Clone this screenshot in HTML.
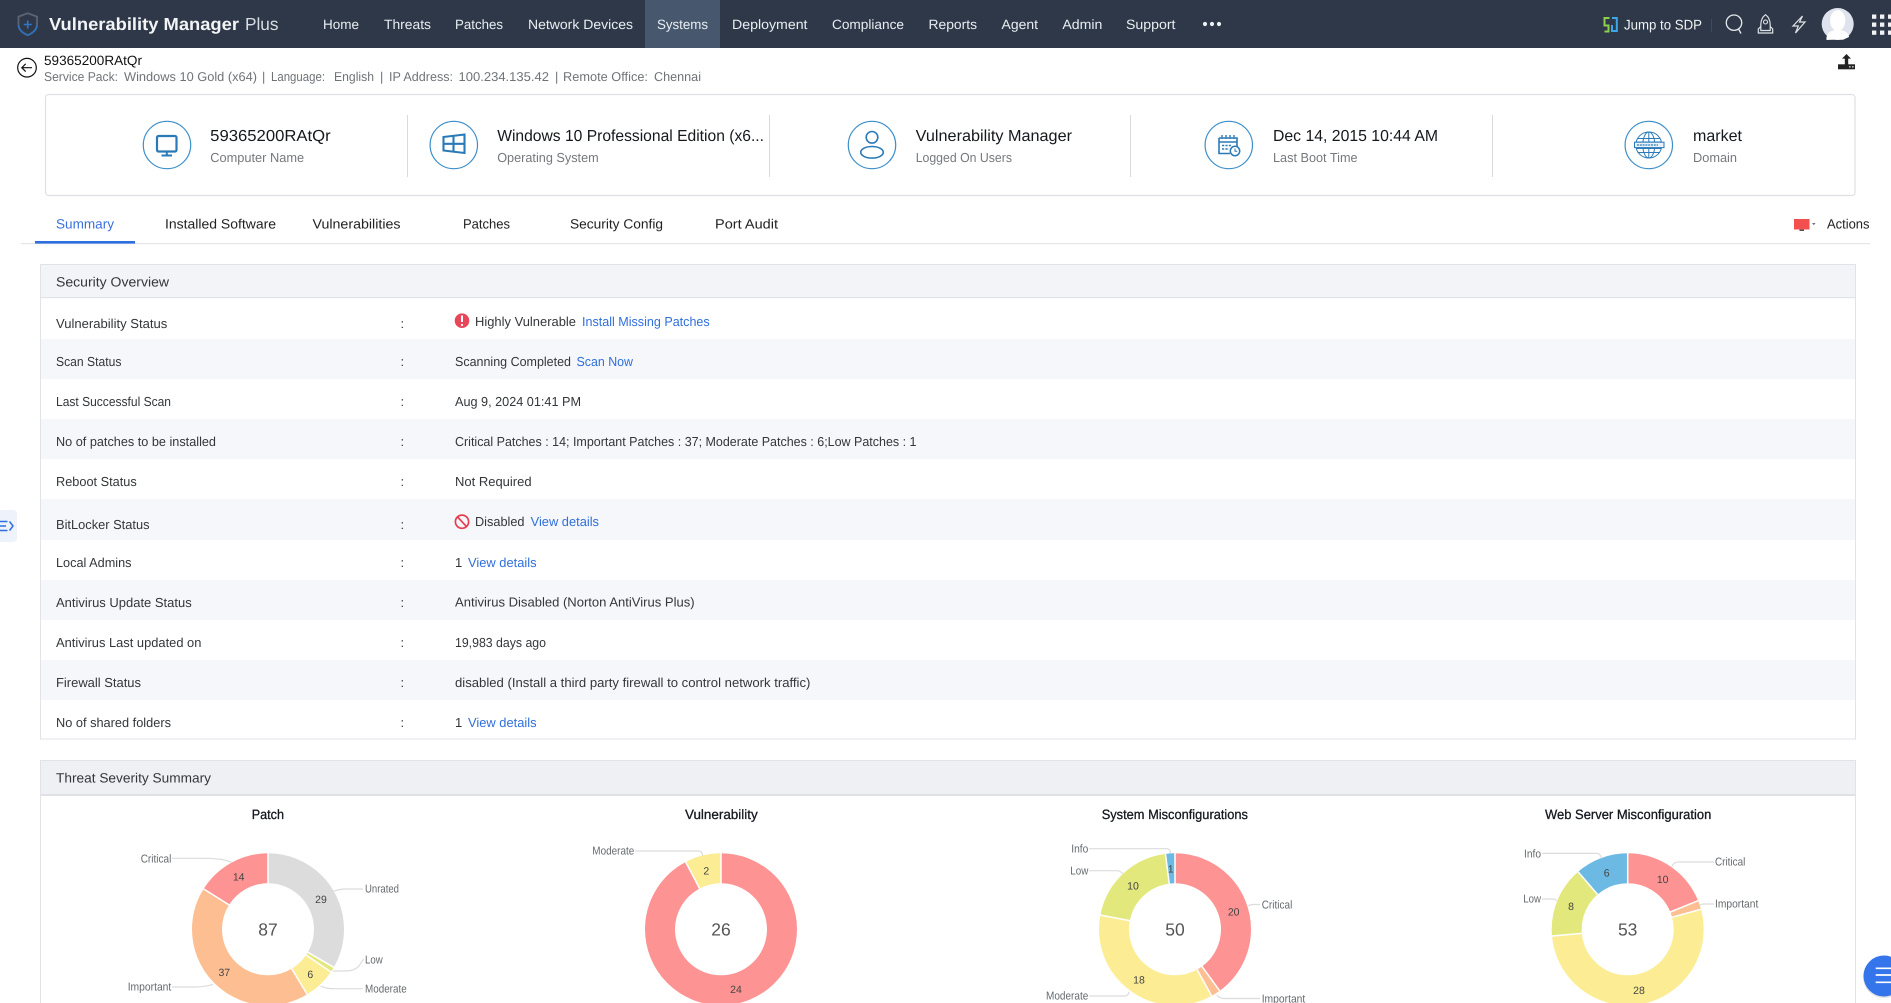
<!DOCTYPE html>
<html lang="en">
<head>
<meta charset="utf-8">
<title>Vulnerability Manager Plus - System Summary</title>
<style>
html,body{margin:0;padding:0;width:1891px;height:1003px;overflow:hidden;background:#fff}
svg{display:block;font-family:"Liberation Sans",Arial,sans-serif;text-rendering:geometricPrecision}
.m{font-size:13.5px;fill:#e9edf2}
.t{font-size:13.5px;fill:#222}
.s{font-size:12.8px;fill:#6f7378}
.big{font-size:16px;fill:#15181c}
.sub{font-size:13px;fill:#75787d}
.l{font-size:13px;fill:#33363a}
.v{font-size:13px;fill:#33363a}
.a{font-size:13px;fill:#2f6fdb}
.h{font-size:13.5px;fill:#33363a}
.ct{font-size:13.5px;fill:#15181f;stroke:#15181f;stroke-width:.3px}
.cl{font-size:11.5px;fill:#666a6e}
.d{font-size:10.5px;fill:#444;text-anchor:middle}
.c{font-size:17.5px;fill:#555;text-anchor:middle}
.ld{fill:none;stroke:#dcdcdc;stroke-width:1.2}
.ci{fill:#fff;stroke:#3d8fc9;stroke-width:1.2}
.ic{fill:none;stroke:#2a7ab8;stroke-width:1.6}
circle.sl{fill:none;stroke-width:30}
.sep{stroke:#fff;stroke-width:1.5}
</style>
</head>
<body>
<svg xmlns="http://www.w3.org/2000/svg" width="1891" height="1003" viewBox="0 0 1891 1003">
<!-- Top bar -->
<rect x="0" y="0" width="1891" height="48" fill="#2e3848"/>
<rect x="645" y="0" width="75" height="48" fill="#47586e"/>
<path d="M27.7 13.2 L37 16.6 V24 C37 29.5 33 33 27.7 35.2 C22.5 33 18.5 29.5 18.5 24 V16.6 Z" fill="none" stroke="#5b6472" stroke-width="1.8"/>
<path d="M37 25 C37 29.5 33 33 27.7 35.2 C22.5 33 18.5 29.5 18.5 25" fill="none" stroke="#2f6fb5" stroke-width="1.8"/>
<path d="M27.7 20.5 V28.5 M23.7 24.5 H31.7" stroke="#2f78c5" stroke-width="1.6"/>
<text x="49" y="30" textLength="190" lengthAdjust="spacingAndGlyphs" font-size="17.5" font-weight="bold" fill="#f2f4f6">Vulnerability Manager</text>
<text x="245" y="30" textLength="33.5" lengthAdjust="spacingAndGlyphs" font-size="17.5" fill="#d9dde2">Plus</text>
<text class="m" x="323" y="29" textLength="36" lengthAdjust="spacingAndGlyphs">Home</text>
<text class="m" x="384" y="29" textLength="47" lengthAdjust="spacingAndGlyphs">Threats</text>
<text class="m" x="455" y="29" textLength="48" lengthAdjust="spacingAndGlyphs">Patches</text>
<text class="m" x="528" y="29" textLength="105" lengthAdjust="spacingAndGlyphs">Network Devices</text>
<text class="m" x="657" y="29" textLength="51" lengthAdjust="spacingAndGlyphs">Systems</text>
<text class="m" x="732" y="29" textLength="75.5" lengthAdjust="spacingAndGlyphs">Deployment</text>
<text class="m" x="832" y="29" textLength="72" lengthAdjust="spacingAndGlyphs">Compliance</text>
<text class="m" x="928.5" y="29" textLength="48.5" lengthAdjust="spacingAndGlyphs">Reports</text>
<text class="m" x="1001.5" y="29" textLength="36.5" lengthAdjust="spacingAndGlyphs">Agent</text>
<text class="m" x="1062.4" y="29" textLength="40" lengthAdjust="spacingAndGlyphs">Admin</text>
<text class="m" x="1126" y="29" textLength="49.5" lengthAdjust="spacingAndGlyphs">Support</text>
<circle cx="1205" cy="24" r="2.1" fill="#eef0f3"/><circle cx="1212" cy="24" r="2.1" fill="#eef0f3"/><circle cx="1219" cy="24" r="2.1" fill="#eef0f3"/>
<!-- Right header icons -->
<path d="M1609.5 18 H1604.5 V25.5 H1608.5 V31.5 H1604.5" fill="none" stroke="#8ad14c" stroke-width="2"/>
<path d="M1612 18 H1616.8 V31 H1612 V25" fill="none" stroke="#3aa8e8" stroke-width="2"/>
<text x="1624" y="29.3" textLength="78" lengthAdjust="spacingAndGlyphs" font-size="14" fill="#f0f2f5">Jump to SDP</text>
<rect x="1711" y="19" width="1" height="13" fill="#3e4b5e"/>
<circle cx="1734" cy="22.7" r="7.7" fill="none" stroke="#e6e8ec" stroke-width="1.3"/>
<path d="M1738.5 29 L1741 33.5" stroke="#e6e8ec" stroke-width="1.3"/>
<path d="M1765.5 14.7 C1761.6 17.5 1760.8 21 1760.8 25 V30.5 H1770.2 V25 C1770.2 21 1769.4 17.5 1765.5 14.7 Z" fill="none" stroke="#dfe2e7" stroke-width="1.2"/>
<circle cx="1765.5" cy="22" r="2" fill="none" stroke="#dfe2e7" stroke-width="1.1"/>
<path d="M1760.8 26.5 L1758.3 29 V33 H1772.7 V29 L1770.2 26.5" fill="none" stroke="#dfe2e7" stroke-width="1.2"/>
<path d="M1802.5 16 L1793 26 H1798.3 L1795.5 33 L1805 22 H1799.5 L1802.5 16 Z" fill="none" stroke="#e0e3e8" stroke-width="1.2"/>
<circle cx="1837.7" cy="24" r="16" fill="#dfe3ed"/>
<ellipse cx="1837.7" cy="20.5" rx="7.6" ry="10.5" fill="#fff"/>
<path d="M1826.5 40 C1826 33 1831 30 1837.7 30 C1844.5 30 1849 33 1849 37 L1843 39.8 H1832 Z" fill="#fff"/>
<g fill="#f0f2f5">
<rect x="1872" y="14.5" width="4.3" height="4.3"/><rect x="1880" y="14.5" width="4.3" height="4.3"/><rect x="1888" y="14.5" width="3" height="4.3"/>
<rect x="1872" y="22.5" width="4.3" height="4.3"/><rect x="1880" y="22.5" width="4.3" height="4.3"/><rect x="1888" y="22.5" width="3" height="4.3"/>
<rect x="1872" y="30.5" width="4.3" height="4.3"/><rect x="1880" y="30.5" width="4.3" height="4.3"/><rect x="1888" y="30.5" width="3" height="4.3"/>
</g>
<!-- Breadcrumb -->
<circle cx="27" cy="67.7" r="9.3" fill="none" stroke="#111" stroke-width="1.2"/>
<path d="M32 67.7 H22 M25.7 63.8 L21.8 67.7 L25.7 71.6" fill="none" stroke="#111" stroke-width="1.2"/>
<text class="t" x="44" y="65" textLength="98" lengthAdjust="spacingAndGlyphs" style="fill:#111">59365200RAtQr</text>
<text class="s" x="44" y="81" textLength="74" lengthAdjust="spacingAndGlyphs">Service Pack:</text>
<text class="s" x="124" y="81" textLength="133" lengthAdjust="spacingAndGlyphs">Windows 10 Gold (x64)</text>
<text class="s" x="262" y="81">|</text>
<text class="s" x="271" y="81" textLength="54" lengthAdjust="spacingAndGlyphs" style="font-size:13px">Language:</text>
<text class="s" x="334" y="81" textLength="40" lengthAdjust="spacingAndGlyphs">English</text>
<text class="s" x="380" y="81">|</text>
<text class="s" x="389" y="81" textLength="64" lengthAdjust="spacingAndGlyphs">IP Address:</text>
<text class="s" x="458.5" y="81" textLength="90.5" lengthAdjust="spacingAndGlyphs">100.234.135.42</text>
<text class="s" x="555" y="81">|</text>
<text class="s" x="563" y="81" textLength="85" lengthAdjust="spacingAndGlyphs">Remote Office:</text>
<text class="s" x="654" y="81" textLength="47" lengthAdjust="spacingAndGlyphs">Chennai</text>
<!-- Upload icon -->
<path d="M1846.5 54 L1851 58.6 H1848.2 V65 H1844.8 V58.6 H1842 Z" fill="#222"/>
<rect x="1838" y="64.3" width="17" height="5" fill="#222"/>
<rect x="1849" y="66" width="1.6" height="1.6" fill="#bbb"/><rect x="1852" y="66" width="1.6" height="1.6" fill="#bbb"/>
<!-- Info card -->
<rect x="45.5" y="94.5" width="1809.5" height="101" rx="3" fill="#fff" stroke="#dfe0e6" stroke-width="1.2"/>
<g fill="#d9dadd">
<rect x="407" y="115" width="1" height="62"/><rect x="769" y="115" width="1" height="62"/><rect x="1130" y="115" width="1" height="62"/><rect x="1492" y="115" width="1" height="62"/>
</g>
<circle class="ci" cx="167" cy="145" r="23.7"/>
<rect x="157" y="136" width="19.5" height="15.5" rx="1.5" fill="none" stroke="#2a7ab8" stroke-width="2.2"/>
<path d="M166.8 151.5 V155 M161.5 155.5 H172" stroke="#2a7ab8" stroke-width="2" fill="none"/>
<text class="big" x="210.2" y="141" textLength="120.5" lengthAdjust="spacingAndGlyphs">59365200RAtQr</text>
<text class="sub" x="210.2" y="162" textLength="94" lengthAdjust="spacingAndGlyphs">Computer Name</text>
<circle class="ci" cx="453.8" cy="145" r="23.7"/>
<path d="M443.5 137 L464.5 134.5 V153 L443.5 150.5 Z M453.5 136 V152 M443.5 143.8 H464.5" fill="none" stroke="#2a7ab8" stroke-width="2.1"/>
<text class="big" x="497.2" y="141" textLength="266.8" lengthAdjust="spacingAndGlyphs">Windows 10 Professional Edition (x6...</text>
<text class="sub" x="497.2" y="162" textLength="101.5" lengthAdjust="spacingAndGlyphs">Operating System</text>
<circle class="ci" cx="872" cy="145" r="23.7"/>
<circle class="ic" cx="872" cy="137.3" r="5.8"/>
<ellipse class="ic" cx="872" cy="152.3" rx="11.3" ry="5.8"/>
<text class="big" x="915.7" y="141" textLength="156.3" lengthAdjust="spacingAndGlyphs">Vulnerability Manager</text>
<text class="sub" x="915.7" y="162" textLength="96.3" lengthAdjust="spacingAndGlyphs">Logged On Users</text>
<circle class="ci" cx="1228.8" cy="145" r="23.7"/>
<path d="M1219 138 H1237 V147 M1219 138 V153.5 H1230 M1219 142 H1237" fill="none" stroke="#2a7ab8" stroke-width="1.6"/>
<path d="M1222 135 V139 M1226 135 V139 M1230 135 V139 M1234 135 V139 M1222 145.5 H1232 M1222 149 H1229" stroke="#2a7ab8" stroke-width="1.4" fill="none" stroke-dasharray="2.2 1.2"/>
<circle cx="1235" cy="151" r="4.7" fill="#fff" stroke="#2a7ab8" stroke-width="1.5"/>
<path d="M1235 148.5 V151.3 H1237.3" fill="none" stroke="#2a7ab8" stroke-width="1"/>
<text class="big" x="1273" y="141" textLength="165" lengthAdjust="spacingAndGlyphs">Dec 14, 2015 10:44 AM</text>
<text class="sub" x="1273" y="162" textLength="84.6" lengthAdjust="spacingAndGlyphs">Last Boot Time</text>
<circle class="ci" cx="1648.8" cy="145" r="23.7"/>
<g fill="none" stroke="#2a7ab8" stroke-width="1">
<circle cx="1648.8" cy="145" r="13"/><ellipse cx="1648.8" cy="145" rx="6" ry="13"/>
<path d="M1648.8 132 V158 M1637.5 138.5 H1660 M1636 142 H1661.5 M1636 148.5 H1661.5 M1637.5 152.5 H1660"/>
</g>
<rect x="1634.5" y="142.2" width="29.5" height="5.4" fill="#eaf3fa" stroke="#2a7ab8" stroke-width="1"/>
<path d="M1637 145 H1658" stroke="#2a7ab8" stroke-width="1.2" stroke-dasharray="2 .8"/>
<text class="big" x="1693" y="141" textLength="49" lengthAdjust="spacingAndGlyphs">market</text>
<text class="sub" x="1693" y="162" textLength="44" lengthAdjust="spacingAndGlyphs">Domain</text>
<!-- Tabs -->
<rect x="21" y="243" width="1849" height="1.2" fill="#e4e5e9"/>
<rect x="35" y="241" width="100" height="2.6" fill="#2e6fe0"/>
<text class="t" x="56" y="228.6" textLength="58" lengthAdjust="spacingAndGlyphs" style="fill:#3a70dc">Summary</text>
<text class="t" x="165" y="228.6" textLength="111" lengthAdjust="spacingAndGlyphs">Installed Software</text>
<text class="t" x="312.5" y="228.6" textLength="88" lengthAdjust="spacingAndGlyphs">Vulnerabilities</text>
<text class="t" x="463" y="228.6" textLength="47" lengthAdjust="spacingAndGlyphs">Patches</text>
<text class="t" x="570" y="228.6" textLength="93" lengthAdjust="spacingAndGlyphs">Security Config</text>
<text class="t" x="715" y="228.6" textLength="63" lengthAdjust="spacingAndGlyphs">Port Audit</text>
<rect x="1794" y="219" width="15.5" height="10.5" fill="#f44f4f"/>
<rect x="1799.5" y="229.5" width="4.5" height="1.5" fill="#555"/>
<path d="M1812 223 H1815.6 L1813.8 225.2 Z" fill="#777"/>
<text class="t" x="1827" y="228.6" textLength="42.5" lengthAdjust="spacingAndGlyphs">Actions</text>
<!-- Side toggle -->
<path d="M0 510 H13 Q17 510 17 514 V538 Q17 542 13 542 H0 Z" fill="#eef2fa"/>
<path d="M0 521.5 H7.5 M0 526 H6 M0 530.5 H7.5 M9.5 521.5 L13 526 L9.5 530.5" fill="none" stroke="#2e6fe0" stroke-width="1.5"/>
<!-- Security overview -->
<rect x="40.5" y="264.5" width="1815" height="474.5" fill="#fff" stroke="#e2e3e8"/>
<rect x="41" y="265" width="1814" height="32.5" fill="#f3f4f8"/>
<rect x="41" y="297" width="1814" height="1.2" fill="#e2e3e8"/>
<g fill="#f6f7fb">
<rect x="41" y="339" width="1814" height="40"/>
<rect x="41" y="419" width="1814" height="40"/>
<rect x="41" y="499" width="1814" height="41"/>
<rect x="41" y="580" width="1814" height="40"/>
<rect x="41" y="660" width="1814" height="40"/>
</g>
<text class="h" x="56" y="286.7" textLength="113" lengthAdjust="spacingAndGlyphs">Security Overview</text>
<text class="l" x="56" y="328" textLength="111.3" lengthAdjust="spacingAndGlyphs">Vulnerability Status</text>
<text class="l" x="56" y="366" textLength="65.4" lengthAdjust="spacingAndGlyphs">Scan Status</text>
<text class="l" x="56" y="406" textLength="115" lengthAdjust="spacingAndGlyphs">Last Successful Scan</text>
<text class="l" x="56" y="446" textLength="160" lengthAdjust="spacingAndGlyphs">No of patches to be installed</text>
<text class="l" x="56" y="486" textLength="80.7" lengthAdjust="spacingAndGlyphs">Reboot Status</text>
<text class="l" x="56" y="529" textLength="93.5" lengthAdjust="spacingAndGlyphs">BitLocker Status</text>
<text class="l" x="56" y="567" textLength="75.5" lengthAdjust="spacingAndGlyphs">Local Admins</text>
<text class="l" x="56" y="607" textLength="135.7" lengthAdjust="spacingAndGlyphs">Antivirus Update Status</text>
<text class="l" x="56" y="647" textLength="145.4" lengthAdjust="spacingAndGlyphs">Antivirus Last updated on</text>
<text class="l" x="56" y="687" textLength="85" lengthAdjust="spacingAndGlyphs">Firewall Status</text>
<text class="l" x="56" y="727" textLength="115" lengthAdjust="spacingAndGlyphs">No of shared folders</text>
<g class="l">
<text class="l" x="400.5" y="328">:</text><text class="l" x="400.5" y="366">:</text><text class="l" x="400.5" y="406">:</text><text class="l" x="400.5" y="446">:</text><text class="l" x="400.5" y="486">:</text><text class="l" x="400.5" y="529">:</text><text class="l" x="400.5" y="567">:</text><text class="l" x="400.5" y="607">:</text><text class="l" x="400.5" y="647">:</text><text class="l" x="400.5" y="687">:</text><text class="l" x="400.5" y="727">:</text>
</g>
<!-- values -->
<circle cx="462" cy="320.7" r="7.3" fill="#e8475a"/>
<path d="M462 315.5 V322" stroke="#fff" stroke-width="2"/><circle cx="462" cy="325" r="1.1" fill="#fff"/>
<text class="v" x="475" y="326" textLength="101" lengthAdjust="spacingAndGlyphs">Highly Vulnerable</text>
<text class="a" x="582" y="326" textLength="127.7" lengthAdjust="spacingAndGlyphs">Install Missing Patches</text>
<text class="v" x="455" y="366" textLength="116" lengthAdjust="spacingAndGlyphs">Scanning Completed</text>
<text class="a" x="576.5" y="366" textLength="56.5" lengthAdjust="spacingAndGlyphs">Scan Now</text>
<text class="v" x="455" y="406" textLength="126" lengthAdjust="spacingAndGlyphs">Aug 9, 2024 01:41 PM</text>
<text class="v" x="455" y="446" textLength="461.5" lengthAdjust="spacingAndGlyphs">Critical Patches : 14; Important Patches : 37; Moderate Patches : 6;Low Patches : 1</text>
<text class="v" x="455" y="486" textLength="76.6" lengthAdjust="spacingAndGlyphs">Not Required</text>
<circle cx="462" cy="521.7" r="6.6" fill="none" stroke="#e53f4f" stroke-width="1.7"/>
<path d="M457.6 517 L466.4 526.4" stroke="#e53f4f" stroke-width="1.7"/>
<text class="v" x="475" y="526" textLength="49.5" lengthAdjust="spacingAndGlyphs">Disabled</text>
<text class="a" x="530.6" y="526" textLength="68.4" lengthAdjust="spacingAndGlyphs">View details</text>
<text class="v" x="455" y="567">1</text>
<text class="a" x="468" y="567" textLength="68.6" lengthAdjust="spacingAndGlyphs">View details</text>
<text class="v" x="455" y="606.5" textLength="239.6" lengthAdjust="spacingAndGlyphs">Antivirus Disabled (Norton AntiVirus Plus)</text>
<text class="v" x="455" y="647" textLength="91" lengthAdjust="spacingAndGlyphs">19,983 days ago</text>
<text class="v" x="455" y="687" textLength="355.4" lengthAdjust="spacingAndGlyphs">disabled (Install a third party firewall to control network traffic)</text>
<text class="v" x="455" y="727">1</text>
<text class="a" x="468" y="727" textLength="68.6" lengthAdjust="spacingAndGlyphs">View details</text>
<!-- Threat severity -->
<rect x="40.5" y="760.5" width="1815" height="250" fill="#fff" stroke="#e2e3e8"/>
<rect x="41" y="761" width="1814" height="33" fill="#eef0f4"/>
<rect x="41" y="794" width="1814" height="2" fill="#dfe1e6"/>
<text class="h" x="56" y="782.5" textLength="155" lengthAdjust="spacingAndGlyphs">Threat Severity Summary</text>
<!-- Patch donut -->
<text class="ct" x="251.7" y="819" textLength="32.3" lengthAdjust="spacingAndGlyphs">Patch</text>
<g transform="translate(268 929.3)">
<g transform="rotate(-90)">
<circle class="sl" r="61" stroke="#dcdcdc" pathLength="87" stroke-dasharray="29 58"/>
<circle class="sl" r="61" stroke="#e3e87c" pathLength="87" stroke-dasharray="1 86" stroke-dashoffset="-29"/>
<circle class="sl" r="61" stroke="#fced94" pathLength="87" stroke-dasharray="6 81" stroke-dashoffset="-30"/>
<circle class="sl" r="61" stroke="#fdbe92" pathLength="87" stroke-dasharray="37 50" stroke-dashoffset="-36"/>
<circle class="sl" r="61" stroke="#fe9393" pathLength="87" stroke-dasharray="14 73" stroke-dashoffset="-73"/>
</g>
<g class="sep">
<line y1="-45" y2="-77"/><line y1="-45" y2="-77" transform="rotate(120)"/><line y1="-45" y2="-77" transform="rotate(124.14)"/><line y1="-45" y2="-77" transform="rotate(148.97)"/><line y1="-45" y2="-77" transform="rotate(302.07)"/>
</g>
</g>
<path class="ld" d="M172 858.3 H205 C220 858.5 226 860 231.7 862.3"/>
<path class="ld" d="M363 889 H345 C340 889 337 890 333.3 891.3"/>
<path class="ld" d="M364 959.5 C360 960 362 971 345 971 H333"/>
<path class="ld" d="M363 988.7 H335 C328 988.7 325 988 320.7 986"/>
<path class="ld" d="M172 987 H195 C203 987 208 986 213 984.3"/>
<text class="cl" x="140.7" y="862.3" textLength="30.6" lengthAdjust="spacingAndGlyphs">Critical</text>
<text class="cl" x="365" y="892.3" textLength="34" lengthAdjust="spacingAndGlyphs">Unrated</text>
<text class="cl" x="365" y="963.3" textLength="17.7" lengthAdjust="spacingAndGlyphs">Low</text>
<text class="cl" x="365" y="992.7" textLength="41.7" lengthAdjust="spacingAndGlyphs">Moderate</text>
<text class="cl" x="127.7" y="990.7" textLength="43.6" lengthAdjust="spacingAndGlyphs">Important</text>
<text class="d" x="238.7" y="880.5">14</text>
<text class="d" x="321" y="903">29</text>
<text class="d" x="310.3" y="978">6</text>
<text class="d" x="224.3" y="976">37</text>
<text class="c" x="268" y="935.3">87</text>
<!-- Vulnerability donut -->
<text class="ct" x="685" y="819" textLength="72.7" lengthAdjust="spacingAndGlyphs">Vulnerability</text>
<g transform="translate(721 929.3)">
<g transform="rotate(-90)">
<circle class="sl" r="61" stroke="#fe9393" pathLength="26" stroke-dasharray="24 2"/>
<circle class="sl" r="61" stroke="#fced94" pathLength="26" stroke-dasharray="2 24" stroke-dashoffset="-24"/>
</g>
<g class="sep"><line y1="-45" y2="-77"/><line y1="-45" y2="-77" transform="rotate(332.3)"/></g>
</g>
<path class="ld" d="M635 851 H699 Q702 851 702.7 855.7"/>
<text class="cl" x="592.3" y="854.7" textLength="42" lengthAdjust="spacingAndGlyphs">Moderate</text>
<text class="d" x="706.3" y="874.5">2</text>
<text class="d" x="736" y="993">24</text>
<text class="c" x="721" y="935.3">26</text>
<!-- System misconfig donut -->
<text class="ct" x="1101.7" y="819" textLength="146.3" lengthAdjust="spacingAndGlyphs">System Misconfigurations</text>
<g transform="translate(1175 929.3)">
<g transform="rotate(-90)">
<circle class="sl" r="61" stroke="#fe9393" pathLength="50" stroke-dasharray="20 30"/>
<circle class="sl" r="61" stroke="#fdbe92" pathLength="50" stroke-dasharray="1 49" stroke-dashoffset="-20"/>
<circle class="sl" r="61" stroke="#fced94" pathLength="50" stroke-dasharray="18 32" stroke-dashoffset="-21"/>
<circle class="sl" r="61" stroke="#e3e87c" pathLength="50" stroke-dasharray="10 40" stroke-dashoffset="-39"/>
<circle class="sl" r="61" stroke="#6cb9e3" pathLength="50" stroke-dasharray="1 49" stroke-dashoffset="-49"/>
</g>
<g class="sep"><line y1="-45" y2="-77"/><line y1="-45" y2="-77" transform="rotate(144)"/><line y1="-45" y2="-77" transform="rotate(151.2)"/><line y1="-45" y2="-77" transform="rotate(280.8)"/><line y1="-45" y2="-77" transform="rotate(352.8)"/></g>
</g>
<path class="ld" d="M1089 848.7 H1167 Q1170 848.7 1170.5 853"/>
<path class="ld" d="M1089 870.7 H1117 Q1120 870.7 1123.3 874"/>
<path class="ld" d="M1260 904.5 H1253 Q1250 904.5 1248.3 906"/>
<path class="ld" d="M1260 998.5 H1224 Q1220 998.5 1216.7 995"/>
<path class="ld" d="M1089 996 H1125 Q1128 996 1129.3 991.7"/>
<text class="cl" x="1071.3" y="852.7" textLength="17" lengthAdjust="spacingAndGlyphs">Info</text>
<text class="cl" x="1070.3" y="874.7" textLength="18" lengthAdjust="spacingAndGlyphs">Low</text>
<text class="cl" x="1261.7" y="908.3" textLength="30.6" lengthAdjust="spacingAndGlyphs">Critical</text>
<text class="cl" x="1261.7" y="1002.7" textLength="43.6" lengthAdjust="spacingAndGlyphs">Important</text>
<text class="cl" x="1046" y="999.7" textLength="42.3" lengthAdjust="spacingAndGlyphs">Moderate</text>
<text class="d" x="1233.7" y="915.5">20</text>
<text class="d" x="1170.7" y="872.5">1</text>
<text class="d" x="1133" y="889.5">10</text>
<text class="d" x="1139" y="983.5">18</text>
<text class="c" x="1175" y="935.3">50</text>
<!-- Web server donut -->
<text class="ct" x="1545" y="819" textLength="166.3" lengthAdjust="spacingAndGlyphs">Web Server Misconfiguration</text>
<g transform="translate(1627.7 929.3)">
<g transform="rotate(-90)">
<circle class="sl" r="61" stroke="#fe9393" pathLength="53" stroke-dasharray="10 43"/>
<circle class="sl" r="61" stroke="#fdbe92" pathLength="53" stroke-dasharray="1 52" stroke-dashoffset="-10"/>
<circle class="sl" r="61" stroke="#fced94" pathLength="53" stroke-dasharray="28 25" stroke-dashoffset="-11"/>
<circle class="sl" r="61" stroke="#e3e87c" pathLength="53" stroke-dasharray="8 45" stroke-dashoffset="-39"/>
<circle class="sl" r="61" stroke="#6cb9e3" pathLength="53" stroke-dasharray="6 47" stroke-dashoffset="-47"/>
</g>
<g class="sep"><line y1="-45" y2="-77"/><line y1="-45" y2="-77" transform="rotate(67.9)"/><line y1="-45" y2="-77" transform="rotate(74.7)"/><line y1="-45" y2="-77" transform="rotate(264.9)"/><line y1="-45" y2="-77" transform="rotate(319.2)"/></g>
</g>
<path class="ld" d="M1542 853.4 H1597 Q1600 853.4 1601.7 858.3"/>
<path class="ld" d="M1542 899 H1553 Q1555 899 1556.7 900.7"/>
<path class="ld" d="M1714 862 H1678 Q1674 862 1671.7 866.7"/>
<path class="ld" d="M1714 904 H1704 Q1702 904 1700 905"/>
<text class="cl" x="1524" y="857.3" textLength="17" lengthAdjust="spacingAndGlyphs">Info</text>
<text class="cl" x="1523.3" y="902.7" textLength="17.7" lengthAdjust="spacingAndGlyphs">Low</text>
<text class="cl" x="1715" y="865.7" textLength="30.3" lengthAdjust="spacingAndGlyphs">Critical</text>
<text class="cl" x="1715" y="907.7" textLength="43.3" lengthAdjust="spacingAndGlyphs">Important</text>
<text class="d" x="1662.7" y="883">10</text>
<text class="d" x="1606.7" y="876.5">6</text>
<text class="d" x="1571" y="910">8</text>
<text class="d" x="1639" y="994">28</text>
<text class="c" x="1627.7" y="935.3">53</text>
<!-- Floating button -->
<circle cx="1884" cy="977" r="21" fill="#000" opacity=".12"/>
<circle cx="1884" cy="976" r="20.5" fill="#3575ec"/>
<path d="M1875.7 968.3 H1891 M1875.7 975 H1891 M1875.7 982.3 H1891" stroke="#fff" stroke-width="1.7"/>
</svg>
</body>
</html>
